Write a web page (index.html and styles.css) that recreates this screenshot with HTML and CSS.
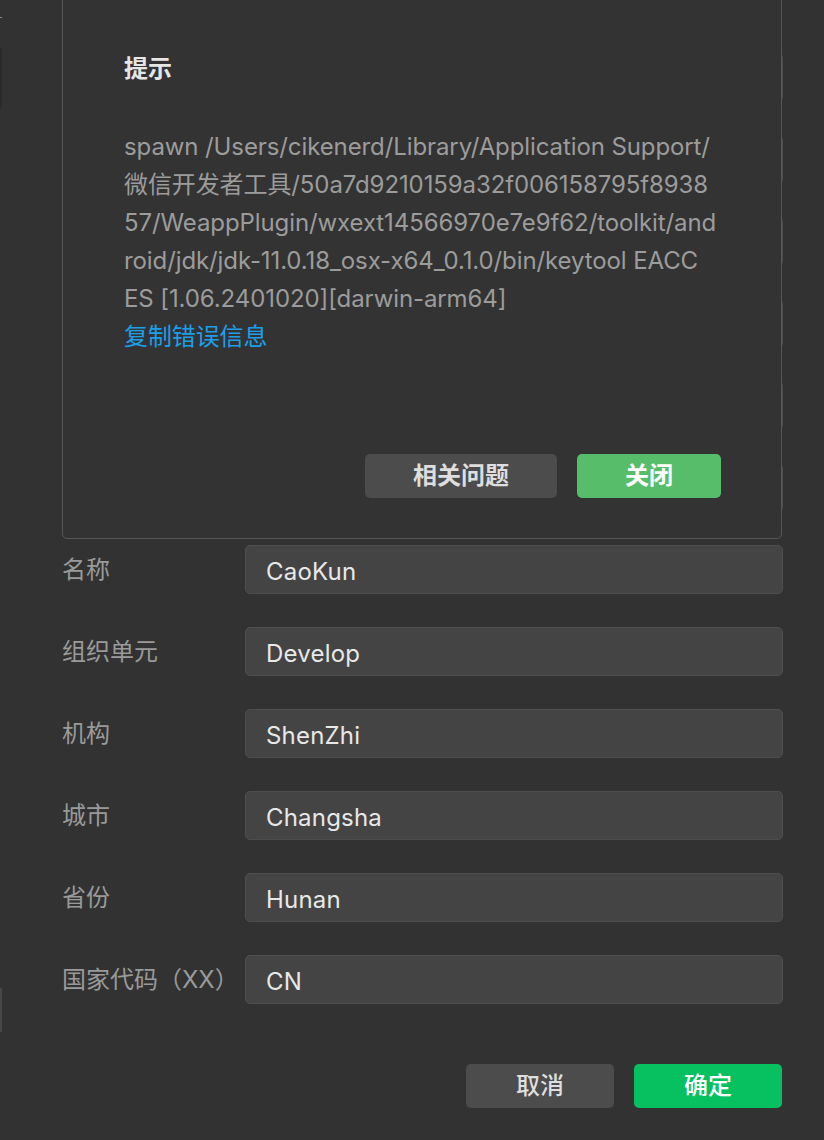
FILE: index.html
```html
<!DOCTYPE html>
<html lang="zh-CN">
<head>
<meta charset="utf-8">
<title>生成证书</title>
<link rel="stylesheet" href="styles.css">
</head>
<body>
<div class="screen">
  <span class="edge edge-tick"></span>
  <span class="edge edge-dark"></span>
  <span class="edge edge-light"></span>

  <form class="form">
    <div class="row"><span class="label"></span><div class="input"></div></div>
    <div class="row"><span class="label"></span><div class="input"></div></div>
    <div class="row"><span class="label"></span><div class="input"></div></div>
    <div class="row"><span class="label"></span><div class="input"></div></div>
    <div class="row"><span class="label"></span><div class="input"></div></div>
    <div class="row"><span class="label"></span><div class="input"></div></div>
    <div class="row"><label class="label">名称</label><div class="input">CaoKun</div></div>
    <div class="row"><label class="label">组织单元</label><div class="input">Develop</div></div>
    <div class="row"><label class="label">机构</label><div class="input">ShenZhi</div></div>
    <div class="row"><label class="label">城市</label><div class="input">Changsha</div></div>
    <div class="row"><label class="label">省份</label><div class="input">Hunan</div></div>
    <div class="row"><label class="label">国家代码（XX）</label><div class="input">CN</div></div>
    <div class="footer">
      <button type="button" class="btn btn-grey">取消</button>
      <button type="button" class="btn btn-primary">确定</button>
    </div>
  </form>

  <div class="dialog">
    <h2 class="dialog-title">提示</h2>
    <p class="dialog-body">spawn /Users/cikenerd/Library/Application Support/<br>微信开发者工具/50a7d9210159a32f006158795f8938<br>57/WeappPlugin/wxext14566970e7e9f62/toolkit/and<br>roid/jdk/jdk-11.0.18_osx-x64_0.1.0/bin/keytool EACC<br>ES [1.06.2401020][darwin-arm64]<br><a class="dialog-link">复制错误信息</a></p>
    <div class="dialog-actions">
      <button type="button" class="btn btn-grey btn-bold btn-wide">相关问题</button>
      <button type="button" class="btn btn-green btn-bold">关闭</button>
    </div>
  </div>
</div>
</body>
</html>
```

FILE: styles.css
```css
* { box-sizing: border-box; }

html, body {
  margin: 0;
  padding: 0;
  background: #323232;
}

body {
  font-family: Inter, "Noto Sans CJK SC", sans-serif;
  font-size: 24px;
  color: #e6e6e6;
}

.screen {
  position: relative;
  width: 824px;
  height: 1140px;
  overflow: hidden;
  background: #323232;
}

.edge {
  position: absolute;
  left: 0;
  width: 2px;
}
.edge-tick { top: 17px; height: 1px; background: #8a8a8a; }
.edge-dark { top: 48px; height: 60px; background: #2a2a2a; }
.edge-light { top: 988px; height: 44px; background: #474747; }

/* form behind the dialog */
.form {
  margin: 0;
  padding: 53px 41px 0 62px;
  display: flex;
  flex-direction: column;
  gap: 33px;
}

.row {
  display: flex;
  align-items: center;
  height: 49px;
}

.label {
  width: 183px;
  flex: none;
  color: #9a9a9a;
  font-size: 24px;
  line-height: 30px;
  white-space: nowrap;
  padding-top: 1px;
}

.input {
  flex: 1;
  height: 49px;
  display: flex;
  align-items: center;
  padding: 3px 20px 0;
  background: #444444;
  border: 1px solid #4e4e4e;
  border-radius: 5px;
  color: #e8e8e8;
  font-size: 24px;
  letter-spacing: 0.2px;
}

.footer {
  display: flex;
  justify-content: flex-end;
  gap: 20px;
  margin-top: 27px;
  padding-right: 1px;
}

.btn {
  height: 44px;
  width: 148px;
  border: none;
  border-radius: 5px;
  font-family: Inter, "Noto Sans CJK SC", sans-serif;
  font-size: 24px;
  font-weight: 500;
  line-height: 44px;
  padding: 0;
  color: #dedede;
  cursor: pointer;
}

.btn-grey { background: #4c4c4c; }
.btn-primary { background: #07c160; color: #ffffff; }
.btn-green { background: #57bd6b; color: #ffffff; width: 144px; }
.btn-bold { font-weight: 700; }
.btn-wide { width: 192px; }

/* modal dialog */
.dialog {
  position: absolute;
  left: 62px;
  top: -40px;
  width: 720px;
  padding: 94px 60px 40px 61px;
  background: #333333;
  border: 1px solid #575757;
  border-radius: 5px;
}

.dialog-title {
  margin: 0 0 45px;
  font-size: 24px;
  font-weight: 700;
  line-height: 28px;
  color: #e6e6e6;
}

.dialog-body {
  margin: 0;
  font-size: 24px;
  line-height: 38px;
  color: #9c9c9c;
  white-space: nowrap;
  letter-spacing: -0.1px;
}

.dialog-link {
  color: #1c9fe9;
  cursor: pointer;
}

.dialog-actions {
  display: flex;
  justify-content: flex-end;
  gap: 20px;
  margin-top: 98px;
}
```
